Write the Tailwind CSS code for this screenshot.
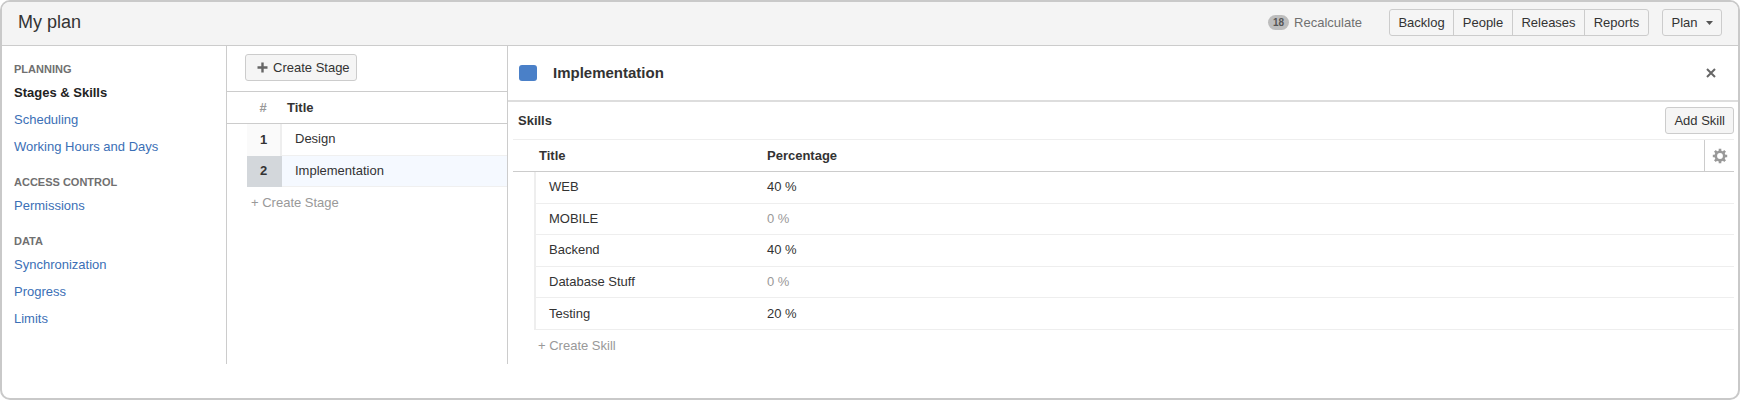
<!DOCTYPE html>
<html lang="en">
<head>
    <meta charset="UTF-8">
    <meta name="viewport" content="width=device-width, initial-scale=1.0">
    <title>My plan</title>
    <script src="https://cdn.jsdelivr.net/npm/@tailwindcss/browser@4"></script>
</head>
<body class="bg-white font-['Liberation_Sans',Arial,sans-serif] text-[13px] leading-4 text-[#333]">
    <div class="min-h-screen border-2 border-[#c9c9c9] rounded-[10px] overflow-hidden">
        <header class="flex items-center justify-between h-11 px-4 pb-0.5 bg-[#f4f4f4] border-b border-[#ccc]">
            <h1 class="text-lg leading-6 pb-0.5">My plan</h1>
            <div class="flex items-center">
                <span class="w-[21px] h-[15px] rounded-full bg-[#bdbdbd] text-[#555] text-[10px] leading-[15px] font-bold text-center">18</span>
                <a href="#" class="ml-[5px] text-[#707070]">Recalculate</a>
                <nav class="flex ml-[27px] h-[27px] leading-[25px] border border-[#ccc] rounded-[3px] bg-[#f5f5f5] divide-x divide-[#ccc]">
                    <a href="#" class="w-16 text-center">Backlog</a>
                    <a href="#" class="w-[59px] text-center">People</a>
                    <a href="#" class="w-[72px] text-center">Releases</a>
                    <a href="#" class="w-[63px] text-center">Reports</a>
                </nav>
                <button class="flex items-center justify-center gap-2 ml-[13px] w-[60px] h-[27px] border border-[#ccc] rounded-[3px] bg-[#f5f5f5]">
                    Plan
                    <svg class="w-[7px] h-1" viewBox="0 0 7 4" fill="#555"><path d="M0 0h7L3.5 4z"/></svg>
                </button>
            </div>
        </header>

        <div class="flex">
            <aside class="w-[225px] shrink-0 border-r border-[#ccc] pl-3 pt-3.5 flex flex-col gap-[13px] leading-[27px] text-[#3b6fb6]">
                <section>
                    <h2 class="text-[11px] leading-[19px] font-bold text-[#707070]">PLANNING</h2>
                    <ul>
                        <li><a href="#" class="font-bold text-[#222]">Stages &amp; Skills</a></li>
                        <li><a href="#">Scheduling</a></li>
                        <li><a href="#">Working Hours and Days</a></li>
                    </ul>
                </section>
                <section>
                    <h2 class="text-[11px] leading-[19px] font-bold text-[#707070]">ACCESS CONTROL</h2>
                    <ul>
                        <li><a href="#">Permissions</a></li>
                    </ul>
                </section>
                <section>
                    <h2 class="text-[11px] leading-[19px] font-bold text-[#707070]">DATA</h2>
                    <ul>
                        <li><a href="#">Synchronization</a></li>
                        <li><a href="#">Progress</a></li>
                        <li><a href="#">Limits</a></li>
                    </ul>
                </section>
            </aside>

            <section class="w-[281px] shrink-0 border-r border-[#ccc]">
                <div class="h-[46px] pt-2 pl-[18px] border-b border-[#ccc]">
                    <button class="flex items-center gap-[5px] h-[27px] pl-[11px] pr-1.5 border border-[#ccc] rounded-[3px] bg-[#f5f5f5]">
                        <svg class="w-[11px] h-[11px]" viewBox="0 0 11 11" fill="#666"><path d="M4.3 .5h2.4v3.8h3.8v2.4H6.7v3.8H4.3V6.7H.5V4.3h3.8z"/></svg>
                        Create Stage
                    </button>
                </div>
                <table class="w-full h-[127px] border-separate border-spacing-0 table-fixed text-left">
                    <thead>
                        <tr class="h-8">
                            <th class="w-5 border-b border-[#ccc]"></th>
                            <th class="w-[35px] border-b border-[#ccc] text-center text-[#999] pr-[3px]">#</th>
                            <th class="border-b border-[#ccc] pl-[5px]">Title</th>
                        </tr>
                    </thead>
                    <tbody>
                        <tr>
                            <td></td>
                            <th class="bg-[#fafafa] border-r-2 border-[#eee] text-center">1</th>
                            <td class="border-b border-[#f0f0f0] pl-[13px]">Design</td>
                        </tr>
                        <tr>
                            <td></td>
                            <th class="bg-[#d3d7db] border-r-2 border-[#d3d7db] text-center">2</th>
                            <td class="bg-[#f5f9ff] border-b border-[#f0f0f0] pl-[13px]">Implementation</td>
                        </tr>
                        <tr class="h-8">
                            <td></td>
                            <td colspan="2" class="pl-1"><button class="text-[#999]">+ Create Stage</button></td>
                        </tr>
                    </tbody>
                </table>
            </section>

            <main class="grow pb-0.5">
                <div class="flex items-center h-14 pl-[11px] pr-[22px] border-b-2 border-[#ddd]">
                    <span class="w-[18px] h-4 rounded-[3px] bg-[#4a80c8]"></span>
                    <h2 class="ml-4 text-[15px] font-bold">Implementation</h2>
                    <button class="ml-auto" aria-label="Close">
                        <svg class="w-[10px] h-[10px]" viewBox="0 0 10 10" fill="none" stroke="#666" stroke-width="2"><path d="M1 1l8 8M9 1L1 9"/></svg>
                    </button>
                </div>
                <div class="ml-[5px] mr-1">
                    <div class="flex items-center justify-between h-[38px] pl-[5px] border-b border-[#eee]">
                        <h3 class="font-bold">Skills</h3>
                        <button class="h-[27px] px-2 border border-[#ccc] rounded-[3px] bg-[#f5f5f5]">Add Skill</button>
                    </div>
                    <table class="w-full h-[222px] border-separate border-spacing-0 table-fixed text-left">
                        <thead>
                            <tr class="h-8">
                                <th class="w-[21px] border-b border-[#ccc]"></th>
                                <th class="w-[233px] border-b border-[#ccc] pl-[5px]">Title</th>
                                <th class="border-b border-[#ccc]">Percentage</th>
                                <th class="w-[30px] border-b border-l border-[#ccc]">
                                    <button class="block mx-auto" aria-label="Settings">
                                        <svg class="w-4 h-4" viewBox="0 0 16 16" fill="none" stroke="#999">
                                            <circle cx="8" cy="8" r="4.2" stroke-width="2.6"/>
                                            <path d="M8 .8v2.4M8 12.8v2.4M.8 8h2.4M12.8 8h2.4M2.9 2.9l1.7 1.7M11.4 11.4l1.7 1.7M13.1 2.9l-1.7 1.7M4.6 11.4l-1.7 1.7" stroke-width="2.6"/>
                                        </svg>
                                    </button>
                                </th>
                            </tr>
                        </thead>
                        <tbody>
                            <tr>
                                <td></td>
                                <td class="border-b border-l-2 border-[#eee] pl-[13px]">WEB</td>
                                <td colspan="2" class="border-b border-[#eee]">40 %</td>
                            </tr>
                            <tr>
                                <td></td>
                                <td class="border-b border-l-2 border-[#eee] pl-[13px]">MOBILE</td>
                                <td colspan="2" class="border-b border-[#eee] text-[#999]">0 %</td>
                            </tr>
                            <tr>
                                <td></td>
                                <td class="border-b border-l-2 border-[#eee] pl-[13px]">Backend</td>
                                <td colspan="2" class="border-b border-[#eee]">40 %</td>
                            </tr>
                            <tr>
                                <td></td>
                                <td class="border-b border-l-2 border-[#eee] pl-[13px]">Database Stuff</td>
                                <td colspan="2" class="border-b border-[#eee] text-[#999]">0 %</td>
                            </tr>
                            <tr>
                                <td></td>
                                <td class="border-b border-l-2 border-[#eee] pl-[13px]">Testing</td>
                                <td colspan="2" class="border-b border-[#eee]">20 %</td>
                            </tr>
                            <tr class="h-8">
                                <td></td>
                                <td colspan="3" class="pl-1"><button class="text-[#999]">+ Create Skill</button></td>
                            </tr>
                        </tbody>
                    </table>
                </div>
            </main>
        </div>
    </div>
</body>
</html>
